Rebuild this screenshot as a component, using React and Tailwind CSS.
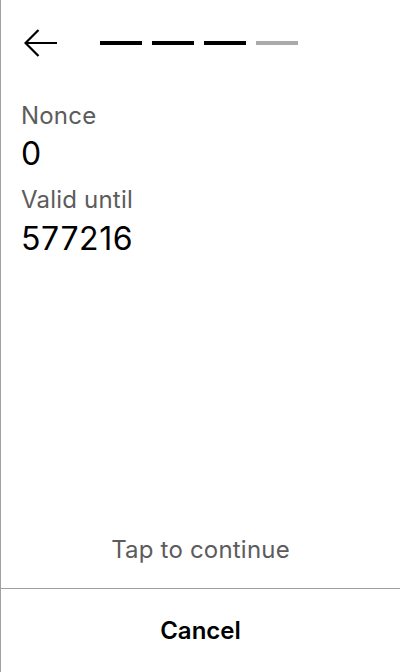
export default function App() {
  return (
    <div
      className="flex h-[672px] w-[400px] flex-col border-l border-[#a0a0a0] bg-white text-black"
      style={{ fontFamily: "Inter, 'Noto Sans', sans-serif" }}
    >
      <div className="flex h-[86px] items-center pl-[23px] pr-4">
        <svg width="34" height="28" viewBox="0 0 34 28" fill="none" stroke="black" strokeWidth="2.2">
          <path d="M33 14H1.5M14.5 1L1.5 14L14.5 27" />
        </svg>
        <div className="ml-[42px] flex gap-[10px]">
          <div className="h-1 w-[42px] bg-black" />
          <div className="h-1 w-[42px] bg-black" />
          <div className="h-1 w-[42px] bg-black" />
          <div className="h-1 w-[42px] bg-[#aaaaaa]" />
        </div>
      </div>

      <div className="flex flex-col px-5 pt-[15px]">
        <span className="text-[24px] leading-[30px] tracking-[0.2px] text-[#5c5c5c]">Nonce</span>
        <span className="mt-[3px] text-[32px] leading-[40px] tracking-[0.6px]">0</span>
        <span className="mt-[11px] text-[24px] leading-[30px] tracking-[0.2px] text-[#5c5c5c]">Valid until</span>
        <span className="mt-[4px] text-[32px] leading-[40px] tracking-[0.6px]">577216</span>
      </div>

      <div className="flex-1" />

      <div className="flex h-[76px] items-center justify-center text-[24px] tracking-[0.2px] text-[#5c5c5c]">
        Tap to continue
      </div>
      <div className="flex h-[84px] items-center justify-center border-t border-[#a0a0a0] text-[24px] font-semibold">
        Cancel
      </div>
    </div>
  );
}
